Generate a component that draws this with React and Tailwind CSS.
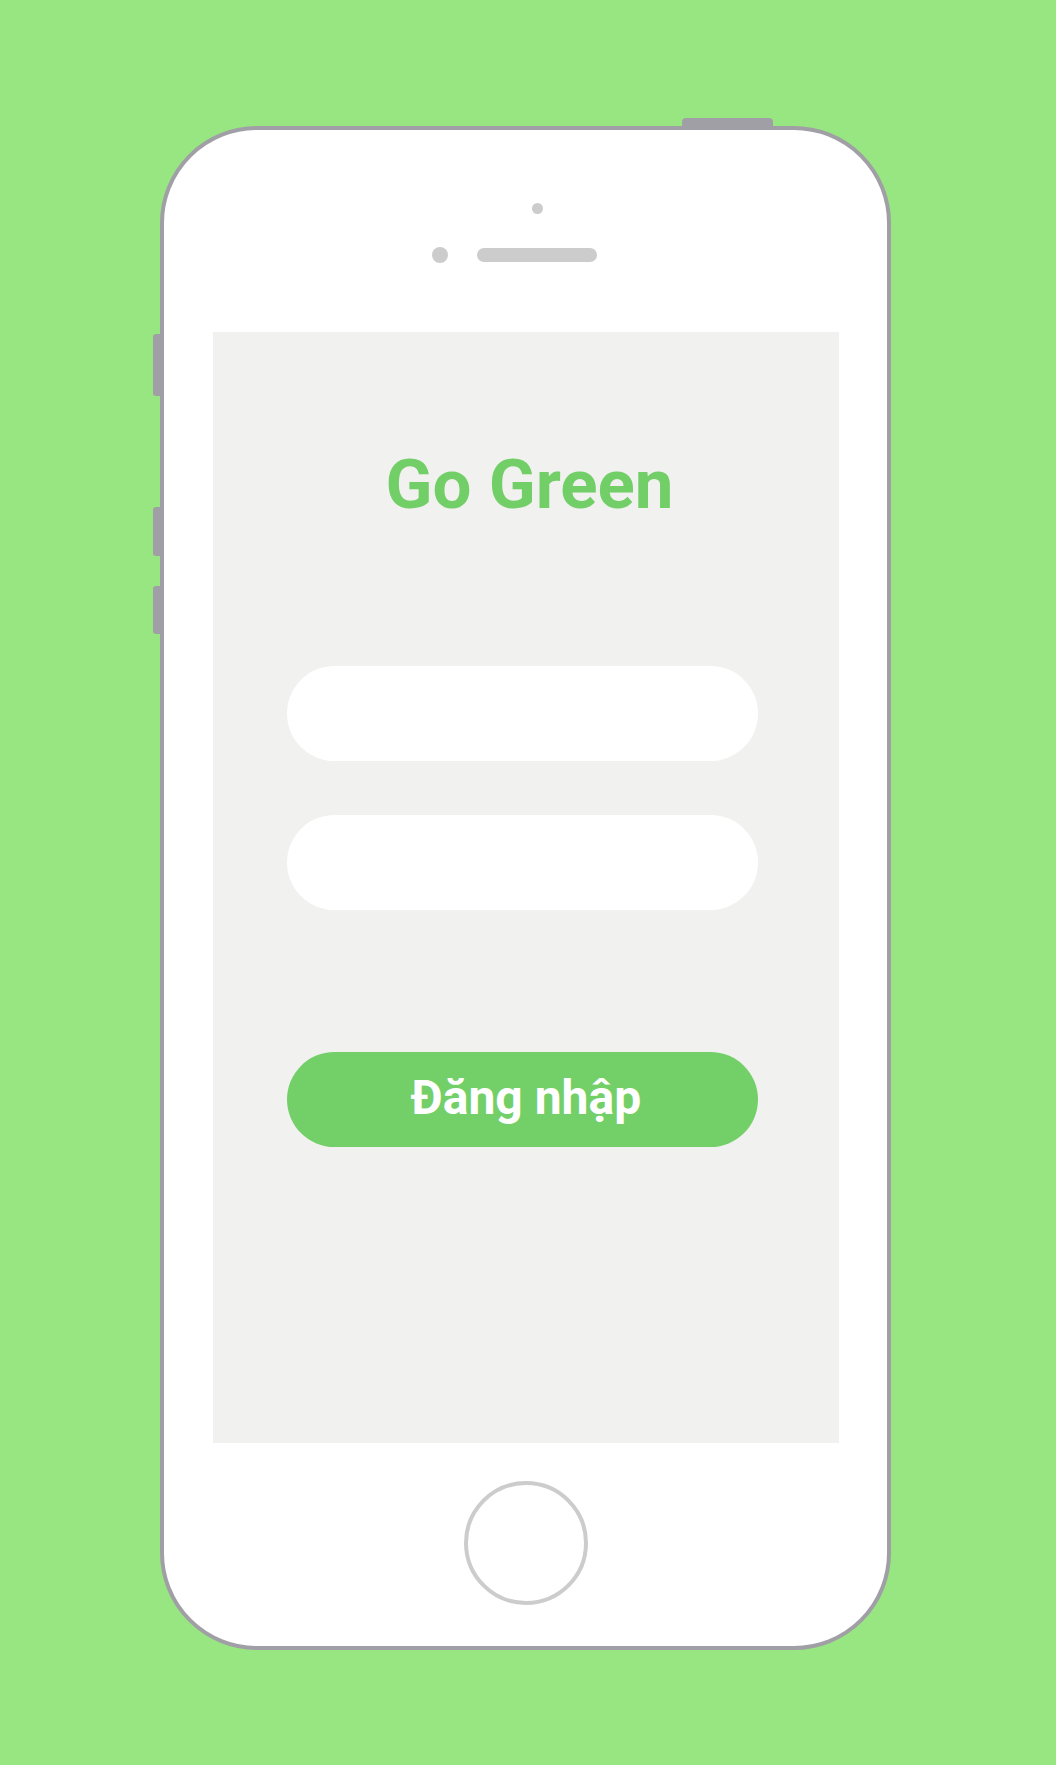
import React from 'react';

const App = () => {
  return (
    <div className="w-full h-[1765px] bg-[#98e681] pt-[126px] pl-[160px]" style={{ fontFamily: 'Roboto, "Noto Sans", sans-serif' }}>
      {/* Phone body */}
      <div className="relative w-[731px] h-[1524px] bg-white border-4 border-[#a19fa6] rounded-[97px] flex flex-col">
        {/* side + top buttons */}
        <div className="absolute -top-[12px] left-[518px] w-[91px] h-[9px] bg-[#a19fa6] rounded-t-[4px]" />
        <div className="absolute -left-[11px] top-[204px] w-[8px] h-[62px] bg-[#a19fa6] rounded-l-[3px]" />
        <div className="absolute -left-[11px] top-[377px] w-[8px] h-[49px] bg-[#a19fa6] rounded-l-[3px]" />
        <div className="absolute -left-[11px] top-[456px] w-[8px] h-[48px] bg-[#a19fa6] rounded-l-[3px]" />

        {/* Top: camera + speaker */}
        <div className="h-[202px] flex flex-col items-center pt-[73px] pl-[23px]">
          <div className="w-[11px] h-[11px] rounded-full bg-[#cccccc]" />
          <div className="mt-[33px] flex items-center">
            <div className="w-[16px] h-[16px] rounded-full bg-[#cccccc]" />
            <div className="ml-[29px] w-[120px] h-[14px] rounded-full bg-[#cccccc]" />
            <div className="ml-[29px] w-[16px] h-[16px]" />
          </div>
        </div>

        {/* Screen */}
        <div className="ml-[49px] w-[626px] h-[1111px] bg-[#f1f1f0] flex flex-col pt-[118px]">
          <h1 className="pl-[7px] text-center text-[69px] leading-none font-bold text-[#72cf68]">Go Green</h1>
          <div className="ml-[74px] w-[471px] mt-[147px] flex flex-col">
            <input className="h-[95px] rounded-full bg-white outline-none px-10 text-2xl" />
            <input type="password" className="mt-[54px] h-[95px] rounded-full bg-white outline-none px-10 text-2xl" />
            <button className="mt-[142px] h-[95px] rounded-full bg-[#73cf68] text-white text-[48px] font-bold leading-none flex items-center justify-center pb-[3px] pl-[7px]">
              Đăng nhập
            </button>
          </div>
        </div>

        {/* Home button */}
        <div className="flex justify-center pt-[38px]">
          <div className="w-[124px] h-[124px] rounded-full border-4 border-[#cccccc]" />
        </div>
      </div>
    </div>
  );
};

export default App;
